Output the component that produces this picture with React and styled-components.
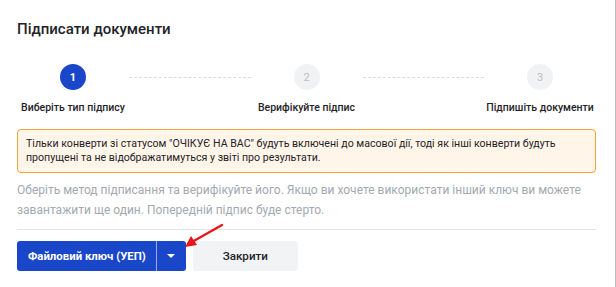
import React from "react";
import styled, { createGlobalStyle } from "styled-components";

const Global = createGlobalStyle`
  html, body { margin: 0; padding: 0; background: #fff; }
  body { font-family: Roboto, "Noto Sans", Arial, sans-serif; color: #1f2329; }
`;

const Page = styled.div`
  width: 615px;
  min-height: 287px;
  border-right: 1px solid #bdbdbd;
  box-sizing: content-box;
`;

const Modal = styled.div`
  padding: 19px 19px 0 17px;
  display: flex;
  flex-direction: column;
`;

const Title = styled.h2`
  margin: 0;
  font-size: 15px;
  line-height: 20px;
  font-weight: 500;
  color: #1f2329;
`;

const Stepper = styled.div`
  display: flex;
  align-items: flex-start;
  margin-top: 25px;
`;

const Step = styled.div`
  width: 112px;
  flex: none;
  display: flex;
  flex-direction: column;
  align-items: center;
`;

const Circle = styled.div`
  width: 26px;
  height: 26px;
  border-radius: 50%;
  display: flex;
  align-items: center;
  justify-content: center;
  font-size: 11px;
  font-weight: ${(p) => (p.$active ? 700 : 400)};
  background: ${(p) => (p.$active ? "#1a47c9" : "#f1f2f4")};
  color: ${(p) => (p.$active ? "#fff" : "#b9bec6")};
`;

const StepLabel = styled.div`
  margin-top: 11px;
  font-size: 10.5px;
  line-height: 14px;
  font-weight: 500;
  color: #1f2329;
  white-space: nowrap;
`;

const Connector = styled.div`
  flex: 1;
  margin-top: 13px;
  border-top: 1px dashed #d9dce1;
`;

const Alert = styled.div`
  margin-top: 14px;
  border: 1px solid #f0a43a;
  background: #fff5e8;
  border-radius: 4px;
  padding: 7px 8px 7px 8px;
  font-size: 10.6px;
  line-height: 14px;
  color: #1f2329;
`;

const Hint = styled.p`
  margin: 7px 0 0;
  font-size: 12px;
  line-height: 20px;
  color: #a3a9b1;
`;

const Divider = styled.hr`
  margin: 9px 0 0;
  border: none;
  border-top: 1px solid #e3e5e8;
`;

const Actions = styled.div`
  display: flex;
  gap: 7px;
  margin-top: 11px;
  position: relative;
`;

const SplitButton = styled.div`
  display: flex;
  height: 30px;
  background: #1a47c9;
  border-radius: 3px;
  overflow: hidden;
`;

const PrimaryPart = styled.button`
  border: none;
  background: transparent;
  color: #fff;
  font-family: inherit;
  font-size: 11.4px;
  font-weight: 700;
  padding: 0 10px 0 11px;
  cursor: pointer;
`;

const CaretPart = styled.button`
  border: none;
  border-left: 1px solid rgba(255, 255, 255, 0.55);
  background: transparent;
  width: 30px;
  display: flex;
  align-items: center;
  justify-content: center;
  cursor: pointer;
  &::after {
    content: "";
    border-left: 4px solid transparent;
    border-right: 4px solid transparent;
    border-top: 4px solid #fff;
  }
`;

const SecondaryButton = styled.button`
  height: 30px;
  width: 105px;
  border: none;
  border-radius: 3px;
  background: #f2f3f5;
  color: #1f2329;
  font-family: inherit;
  font-size: 11.6px;
  font-weight: 500;
  cursor: pointer;
`;

const Arrow = styled.svg`
  position: absolute;
  left: 166px;
  top: -18px;
  width: 42px;
  height: 26px;
  pointer-events: none;
`;

const steps = ["Виберіть тип підпису", "Верифікуйте підпис", "Підпишіть документи"];

export default function App() {
  return (
    <Page>
      <Global />
      <Modal>
        <Title>Підписати документи</Title>
        <Stepper>
          {steps.map((s, i) => (
            <React.Fragment key={s}>
              {i > 0 && <Connector />}
              <Step>
                <Circle $active={i === 0}>{i + 1}</Circle>
                <StepLabel>{s}</StepLabel>
              </Step>
            </React.Fragment>
          ))}
        </Stepper>
        <Alert>
          Тільки конверти зі статусом "ОЧІКУЄ НА ВАС" будуть включені до масової дії, тоді як інші конверти будуть
          пропущені та не відображатимуться у звіті про результати.
        </Alert>
        <Hint>
          Оберіть метод підписання та верифікуйте його. Якщо ви хочете використати інший ключ ви можете
          завантажити ще один. Попередній підпис буде стерто.
        </Hint>
        <Divider />
        <Actions>
          <SplitButton>
            <PrimaryPart>Файловий ключ (УЕП)</PrimaryPart>
            <CaretPart aria-label="more" />
          </SplitButton>
          <SecondaryButton>Закрити</SecondaryButton>
          <Arrow viewBox="0 0 42 26">
            <line x1="39" y1="2" x2="9" y2="19" stroke="#e8161b" strokeWidth="2.4" strokeLinecap="round" />
            <polygon points="2,24 8,13 14,22" fill="#e8161b" />
          </Arrow>
        </Actions>
      </Modal>
    </Page>
  );
}
